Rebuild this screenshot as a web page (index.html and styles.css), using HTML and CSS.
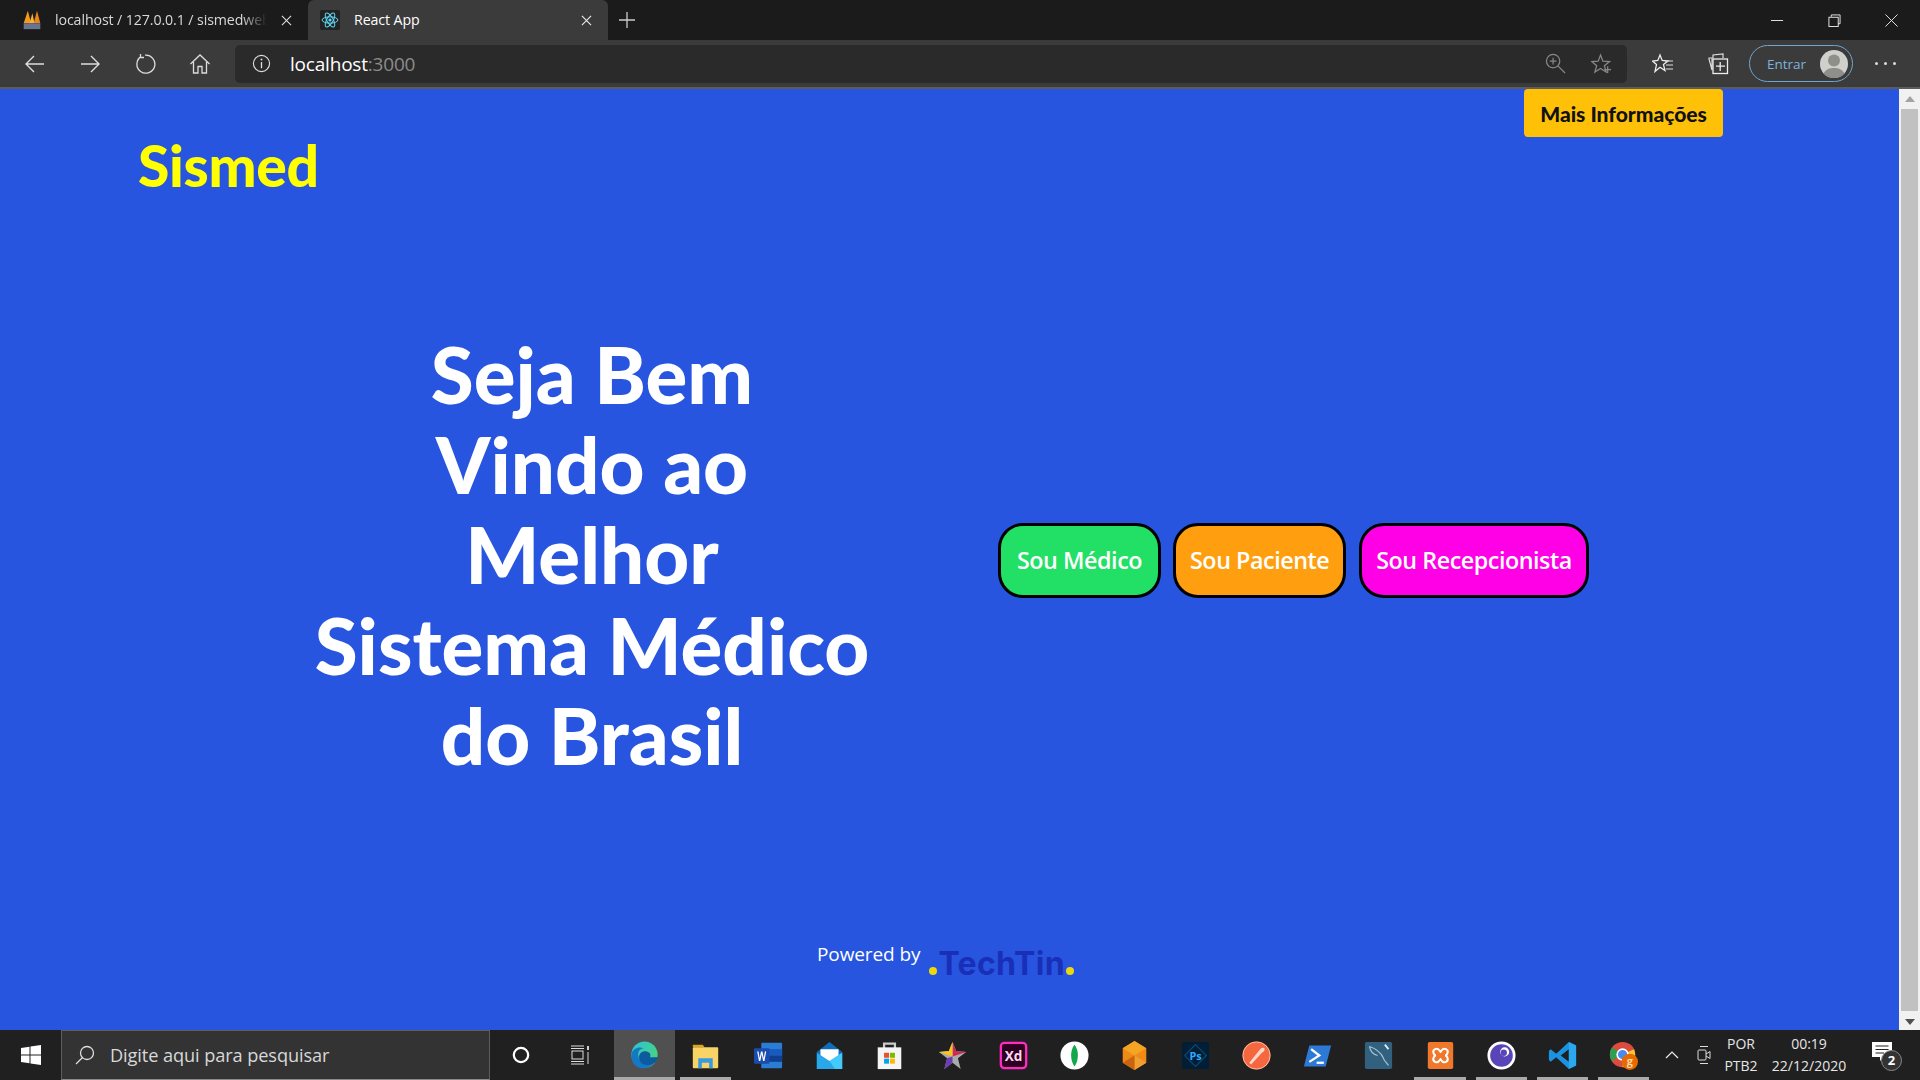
FILE: index.html
```html
<!DOCTYPE html>
<html lang="pt-BR">
<head>
<meta charset="utf-8">
<title>React App</title>
<link rel="stylesheet" href="styles.css">
</head>
<body>
<div class="window">
  <div class="tabbar">
    <div class="tab">
      <svg class="favicon" viewBox="0 0 24 24"><path d="M2 16 L7 1 L11 16Z" fill="#f39a1d"/><path d="M9 16 L12.500 4 L15 16Z" fill="#f6b23a"/><path d="M14 16 L18 1 L22 16Z" fill="#e9861a"/><rect x="2" y="16" width="20" height="7" fill="#6a7390"/></svg>
      <span class="tab-title fade">localhost / 127.0.0.1 / sismedweb</span>
      <svg class="tab-x" viewBox="0 0 12 12"><path d="M1 1L11 11M11 1L1 11" stroke="#ddd" stroke-width="1.2"/></svg>
    </div>
    <div class="tab active">
      <svg class="favicon" viewBox="0 0 24 24"><rect width="24" height="24" rx="2" fill="#222"/><g fill="none" stroke="#61dafb" stroke-width="1.2"><ellipse cx="12" cy="12" rx="9.5" ry="3.8"/><ellipse cx="12" cy="12" rx="9.5" ry="3.8" transform="rotate(60 12 12)"/><ellipse cx="12" cy="12" rx="9.5" ry="3.8" transform="rotate(120 12 12)"/></g><circle cx="12" cy="12" r="1.9" fill="#61dafb"/></svg>
      <span class="tab-title">React App</span>
      <svg class="tab-x" viewBox="0 0 12 12"><path d="M1 1L11 11M11 1L1 11" stroke="#eee" stroke-width="1.2"/></svg>
    </div>
    <svg class="newtab" viewBox="0 0 16 16"><path d="M8 0V16M0 8H16" stroke="#ccc" stroke-width="1.3"/></svg>
    <div class="winctrls">
      <svg class="winbtn" viewBox="0 0 14 14"><path d="M0 7H13" stroke="#eee" stroke-width="1"/></svg>
      <svg class="winbtn" viewBox="0 0 14 14"><path d="M3.5 3V1H13V10.5H11" fill="none" stroke="#eee"/><rect x="1" y="3.5" width="10" height="10" fill="none" stroke="#eee"/></svg>
      <svg class="winbtn" viewBox="0 0 14 14"><path d="M0.5 0.5L13.5 13.5M13.5 0.5L0.5 13.5" stroke="#eee" stroke-width="1"/></svg>
    </div>
  </div>

  <div class="toolbar">
    <div class="nav">
      <svg class="navicon" viewBox="0 0 22 22"><path d="M20 11H2M10 3L2 11L10 19" fill="none" stroke="#ddd" stroke-width="1.4"/></svg>
      <svg class="navicon" viewBox="0 0 22 22"><path d="M2 11H20M12 3L20 11L12 19" fill="none" stroke="#ddd" stroke-width="1.4"/></svg>
      <svg class="navicon" viewBox="0 0 22 22"><path d="M7 3.6A9 9 0 1 0 11 2.2M6.5 1V4.5H10" fill="none" stroke="#ddd" stroke-width="1.3"/></svg>
      <svg class="navicon" viewBox="0 0 22 22"><path d="M1.5 11L11 2L20.5 11M4.5 9V20H9V13.5H13V20H17.5V9" fill="none" stroke="#ddd" stroke-width="1.3"/></svg>
    </div>
    <div class="address">
      <svg class="info" viewBox="0 0 20 20"><circle cx="10" cy="10" r="8.5" fill="none" stroke="#ddd" stroke-width="1.2"/><path d="M10 8.5V15" stroke="#ddd" stroke-width="1.4"/><circle cx="10" cy="5.8" r="1" fill="#ddd"/></svg>
      <span class="url">localhost<span class="port">:3000</span></span>
      <svg class="addr-ic zoomic" viewBox="0 0 22 22"><circle cx="8.5" cy="8.5" r="7" fill="none" stroke="#888" stroke-width="1.3"/><path d="M13.5 13.5L21 21M5 8.5H12M8.5 5V12" stroke="#888" stroke-width="1.3"/></svg>
      <svg class="addr-ic" viewBox="0 0 22 22"><path d="M10 2L12.5 8.5L19.5 9L14 13.3L16 20L10 16.2L4 20L6 13.3L0.8 9L7.5 8.5Z" fill="none" stroke="#888" stroke-width="1.3"/><path d="M14 17.5H21M17.5 14V21" stroke="#888" stroke-width="1.3"/></svg>
    </div>
    <svg class="tool-ic fav" viewBox="0 0 22 22"><path d="M8 2L10.2 7.5L16 8L11.5 11.6L13 17.5L8 14.3L3 18.5L4.5 11.6L0.5 8L5.8 7.5Z" fill="none" stroke="#eee" stroke-width="1.3"/><path d="M13 8H21M14 12H21M14 16H21" stroke="#ddd" stroke-width="1.2"/></svg>
    <svg class="tool-ic coll" viewBox="0 0 22 22"><path d="M6 5V2L16 1V5M2 5H5V17L2 6Z" fill="none" stroke="#ddd" stroke-width="1.2"/><rect x="6" y="6" width="14.5" height="14.5" fill="none" stroke="#eee" stroke-width="1.3"/><path d="M13.2 9V18M9 13.2H18" stroke="#eee" stroke-width="1.3"/></svg>
    <div class="signin">
      <span>Entrar</span>
      <svg class="avatar" viewBox="0 0 28 28"><circle cx="14" cy="14" r="14" fill="#cfcfcb"/><circle cx="14" cy="10.5" r="6" fill="#8e8e8a"/><path d="M3.5 23.5C6 19 10 18 14 18S22 19 24.5 23.5A14 14 0 0 1 3.5 23.5Z" fill="#8e8e8a"/></svg>
    </div>
    <div class="more"><i></i><i></i><i></i></div>
  </div>

  <div class="viewport">
    <main class="page">
      <header class="page-head">
        <h2 class="brand">Sismed</h2>
        <button class="info-btn">Mais Informações</button>
      </header>
      <section class="hero">
        <h1 class="welcome">Seja Bem<br>Vindo ao<br>Melhor<br>Sistema Médico<br>do Brasil</h1>
        <div class="roles">
          <button class="role medico">Sou Médico</button>
          <button class="role paciente">Sou Paciente</button>
          <button class="role recep">Sou Recepcionista</button>
        </div>
      </section>
      <footer class="powered">
        <span>Powered by</span>
        <span class="logo"><i class="dot"></i>TechTin<i class="dot"></i></span>
      </footer>
    </main>
    <aside class="scrollbar">
      <svg class="arrow" viewBox="0 0 10 6"><path d="M5 0L10 6H0Z" fill="#a3a3a3"/></svg>
      <div class="thumb"></div>
      <svg class="arrow" viewBox="0 0 10 6"><path d="M5 6L0 0H10Z" fill="#505050"/></svg>
    </aside>
  </div>

  <div class="taskbar">
    <div class="start"><svg class="winlogo" viewBox="0 0 20 20"><path d="M0 3L8.5 1.7V9.5H0ZM9.5 1.5L20 0V9.5H9.5ZM0 10.5H8.5V18.3L0 17ZM9.5 10.5H20V20L9.5 18.5Z" fill="#fff"/></svg></div>
    <div class="search">
      <svg class="lens" viewBox="0 0 20 20"><circle cx="12" cy="8" r="6.5" fill="none" stroke="#ddd" stroke-width="1.3"/><path d="M7.5 12.5L1 19" stroke="#ddd" stroke-width="1.3"/></svg>
      <span>Digite aqui para pesquisar</span>
    </div>
    <div class="sys-btn"><svg class="cortana" viewBox="0 0 18 18"><circle cx="9" cy="9" r="7.2" fill="none" stroke="#fff" stroke-width="2.2"/></svg></div>
    <div class="sys-btn"><svg class="taskview" viewBox="0 0 20 20"><path d="M1 1H14M1 3.5H14M1 16.5H14M1 19H14" stroke="#ddd" stroke-width="1"/><rect x="2" y="6" width="11" height="8" fill="none" stroke="#ddd"/><path d="M18 1V5" stroke="#fff" stroke-width="1.6"/><path d="M18 7V19" stroke="#ddd" stroke-width="1"/></svg></div>

    <div class="apps">
      <div class="app current"><svg viewBox="0 0 32 32"><defs><linearGradient id="edge" x1="0" y1="0" x2="1" y2="1"><stop offset="0" stop-color="#2bc3d4"/><stop offset="1" stop-color="#52d76b"/></linearGradient></defs><circle cx="16" cy="15" r="14.5" fill="url(#edge)"/><path d="M1.5 16C2 8 10 6 15 8C9 9 8 14 10 19C12 25 20 27 26 25C21 31 12 31.500 7 28C3 25 1.500 21 1.500 16Z" fill="#1578c4"/><path d="M10 18C10 12 16 10 20 12C24 14 22 18 22 18H31C30 22 27 25 24 26C17 28 10 25 10 18Z" fill="#0d5aa0"/></svg></div>
      <div class="app open"><svg viewBox="0 0 32 32"><path d="M2 4H13L15 7H2Z" fill="#e0a21a"/><rect x="2" y="7" width="28" height="23" rx="1" fill="#f8d466"/><path d="M8 30V19H24V30H20V24H12V30Z" fill="#3a9adf"/></svg></div>
      <div class="app nudge"><svg viewBox="0 0 32 32"><rect x="8" y="2" width="23" height="28" rx="1" fill="#2b7cd3"/><rect x="8" y="9" width="23" height="7" fill="#185abd"/><rect x="8" y="16" width="23" height="7" fill="#103f91"/><rect x="0" y="8" width="17" height="17" rx="1" fill="#1a4cb0"/><path d="M3.500 11.500L5.500 22H7L8.500 14.500L10 22H11.500L13.500 11.500H12L10.800 19L9.300 11.500H7.700L6.200 19L5 11.500Z" fill="#fff"/></svg></div>
      <div class="app nudge"><svg viewBox="0 0 32 32"><path d="M2 12L16 1L30 12V31H2Z" fill="#0f6cbd"/><path d="M6 9H26V18L16 24L6 18Z" fill="#fff"/><path d="M2 13L16 22L30 13V31H2Z" fill="#28a8ea"/><path d="M16 22L30 13V31H22Z" fill="#50d9ff" opacity=".7"/></svg></div>
      <div class="app"><svg viewBox="0 0 32 32"><path d="M10 8V3H22V8" fill="none" stroke="#ccc" stroke-width="2.500"/><path d="M3 7H29V31H3Z" fill="#f5f5f5"/><rect x="10" y="13" width="5.500" height="5.500" fill="#e8502f"/><rect x="16.500" y="13" width="5.500" height="5.500" fill="#7db900"/><rect x="10" y="19.500" width="5.500" height="5.500" fill="#00a4ef"/><rect x="16.500" y="19.500" width="5.500" height="5.500" fill="#ffb900"/></svg></div>
      <div class="app nudge"><svg viewBox="0 0 32 32"><path d="M16 1L20 11L31 12L22 19L25 31L16 24L7 31L10 19L1 12L12 11Z" fill="#aaa"/><path d="M16 1L20 11L31 12L16 17Z" fill="#c92a56"/><path d="M16 1L16 17L1 12L12 11Z" fill="#f7c51e"/><path d="M16 17L10 19L7 31L16 24Z" fill="#6e3bb5"/></svg></div>
      <div class="app nudge"><svg viewBox="0 0 32 32"><rect x="2" y="2" width="28" height="28" rx="4" fill="#2e001f" stroke="#ff2bc2" stroke-width="2.500"/><text x="16" y="22" text-anchor="middle" class="xd">Xd</text></svg></div>
      <div class="app nudge"><svg viewBox="0 0 32 32"><circle cx="16" cy="16" r="15.500" fill="#fff"/><path d="M16 4C21 10 21 21 16 28C11 21 11 10 16 4Z" fill="#13a64b"/></svg></div>
      <div class="app"><svg viewBox="0 0 32 32"><path d="M16 0L29 8V24L16 32L3 24V8Z" fill="#ef8a17"/><path d="M16 0L29 8L16 16L3 8Z" fill="#f5a524"/><path d="M16 16L29 24L16 32Z" fill="#f0a030"/><path d="M3 24L16 16V32Z" fill="#c9640f"/></svg></div>
      <div class="app"><svg viewBox="0 0 32 32"><rect x="1" y="1" width="30" height="30" rx="3" fill="#001e36"/><path d="M16 4L28 16L16 28L4 16Z" fill="none" stroke="#0f4a75" stroke-width="1.200"/><text x="16" y="21" text-anchor="middle" class="ps">Ps</text></svg></div>
      <div class="app"><svg viewBox="0 0 32 32"><circle cx="16" cy="16" r="15.500" fill="#f4673f"/><path d="M8 24L20 9C22 7 25 7 25 9C25 11 23 12 22 13L10 26Z" fill="#ffd7c8"/><circle cx="16" cy="16" r="15" fill="none" stroke="#fff" stroke-opacity=".6" stroke-width="1"/></svg></div>
      <div class="app"><svg viewBox="0 0 32 32"><path d="M7 5H31L25 28H1Z" fill="#2d7ad6"/><path d="M9 9L18 16L7 23" fill="none" stroke="#fff" stroke-width="2.500"/><path d="M15 24H23" stroke="#fff" stroke-width="2.500"/></svg></div>
      <div class="app"><svg viewBox="0 0 32 32"><rect x="1" y="1" width="30" height="30" rx="2" fill="#31617f"/><path d="M6 6C12 8 18 12 21 18C22 22 25 24 27 27M6 6C7 12 11 15 15 16" fill="none" stroke="#a9c6d6" stroke-width="1.300"/><path d="M23 4L27 9" stroke="#e4eef3" stroke-width="2"/></svg></div>
      <div class="app open"><svg viewBox="0 0 32 32"><rect x="2" y="1" width="28" height="30" rx="2" fill="#f0782a"/><path d="M10 9C14 7 15 11 16 12C17 11 18 7 22 9C26 11 23 16 21 16C23 16 26 21 22 23C18 25 17 21 16 20C15 21 14 25 10 23C6 21 9 16 11 16C9 16 6 11 10 9Z" fill="none" stroke="#fff" stroke-width="2.200"/></svg></div>
      <div class="app open"><svg viewBox="0 0 32 32"><circle cx="16" cy="16" r="14" fill="#5a45b8" stroke="#fff" stroke-width="3"/><circle cx="19.500" cy="12" r="5" fill="#fff"/><circle cx="18.500" cy="13" r="3.500" fill="#5a45b8"/></svg></div>
      <div class="app open"><svg viewBox="0 0 32 32"><path d="M23 1L31 5V27L23 31L9 18L3 23L1 21V11L3 9L9 14ZM23 9L14 16L23 23Z" fill="#1c93e0"/><path d="M23 1L31 5V27L23 31Z" fill="#2aa8f0"/></svg></div>
      <div class="app open"><svg viewBox="0 0 32 32"><circle cx="15" cy="15" r="14" fill="#dd4b3e"/><path d="M15 15L3 22A14 14 0 0 1 3.500 7Z" fill="#2f9e4f"/><path d="M15 15L27.500 9A14 14 0 0 1 15 29Z" fill="#f6c82f"/><circle cx="15" cy="15" r="6" fill="#4a8af0" stroke="#fff" stroke-width="1.800"/><circle cx="23" cy="23" r="9" fill="#e66a00"/><text x="23" y="27" text-anchor="middle" class="badge-g">g</text></svg></div>
    </div>

    <div class="tray">
      <svg class="chev" viewBox="0 0 14 8"><path d="M1 7L7 1L13 7" fill="none" stroke="#eee" stroke-width="1.200"/></svg>
      <svg class="cam" viewBox="0 0 14 22"><path d="M3 2.500H11M3 19.500H11" stroke="#ddd"/><rect x="1" y="6" width="8" height="10" rx="1" fill="none" stroke="#ddd"/><path d="M9 10L13 7.500V14.500L9 12" fill="none" stroke="#ddd"/></svg>
      <div class="lang"><span>POR</span><span>PTB2</span></div>
      <div class="clock"><span>00:19</span><span>22/12/2020</span></div>
      <div class="notif">
        <svg class="bubble" viewBox="0 0 20 20"><path d="M0 0H20V15H12L8 19V15H0Z" fill="#fff"/><path d="M3.500 4H16.500M3.500 7.500H16.500M3.500 11H12" stroke="#222" stroke-width="1.200"/></svg>
        <span class="count">2</span>
      </div>
    </div>
  </div>
</div>
</body>
</html>
```
FILE: styles.css
```css
* { box-sizing: border-box; }
html, body { margin: 0; height: 100%; overflow: hidden; }
body { font-family: "Open Sans", "Noto Sans", sans-serif; background: #1c1c1c; }
.window { width: 1920px; height: 1080px; display: flex; flex-direction: column; }

/* tab strip */
.tabbar { height: 40px; background: #1b1b1b; display: flex; align-items: stretch; flex: none; }
.tab { width: 306px; display: flex; align-items: center; padding: 0 14px 0 22px; color: #d8d8d8; font-size: 14.2px; letter-spacing: -.1px; }
.tab.active { width: 300px; margin-left: 2px; background: #3b3b3b; border-radius: 6px 6px 0 0; color: #fff; padding: 0 16px 0 12px; }
.favicon { width: 20px; height: 20px; flex: none; }
.tab-title { flex: 1; margin: 0 0 2px 13px; white-space: nowrap; overflow: hidden; }
.tab.active .tab-title { margin-left: 14px; }
.fade { -webkit-mask-image: linear-gradient(90deg, #000 88%, transparent 100%); mask-image: linear-gradient(90deg, #000 88%, transparent 100%); margin-right: 14px; }
.tab-x { width: 11px; height: 11px; flex: none; }
.newtab { width: 16px; height: 16px; align-self: center; margin-left: 11px; }
.winctrls { margin-left: auto; display: flex; align-items: center; padding-right: 22px; gap: 44px; }
.winbtn { width: 13px; height: 13px; }

/* toolbar */
.toolbar { height: 49px; flex: none; background: #3b3b3b; border-bottom: 2px solid #5c5c5c; display: flex; align-items: center; }
.nav { width: 235px; display: flex; align-items: center; padding-left: 24px; gap: 33px; }
.navicon { width: 22px; height: 22px; }
.address { width: 1392px; height: 38px; background: #2a2a2a; border-radius: 5px; display: flex; align-items: center; padding-left: 17px; }
.info { width: 19px; height: 19px; }
.url { margin-left: 19px; font-size: 19px; color: #fff; letter-spacing: -.2px; flex: 1; }
.port { color: #8c8c8c; }
.addr-ic { width: 21px; height: 21px; margin-right: 25px; }
.addr-ic:last-of-type { margin-right: 15px; }
.tool-ic { width: 22px; height: 22px; flex: none; }
.fav { margin-left: 25px; }
.coll { margin-left: 33px; }
.signin { margin-left: 20px; width: 104px; height: 37px; border: 1.5px solid #6fa6cf; border-radius: 19px; display: flex; align-items: center; justify-content: space-between; padding: 0 4px 0 17px; font-size: 13.5px; color: #7cb4de; }
.avatar { width: 28px; height: 28px; }
.more { margin-left: 22px; display: flex; gap: 6px; }
.more i { width: 3px; height: 3px; border-radius: 50%; background: #ddd; }

/* page */
.viewport { flex: 1; display: flex; min-height: 0; }
.page { flex: 1; background: #2755df; display: flex; flex-direction: column; position: relative; }
.page-head { display: flex; justify-content: space-between; align-items: flex-start; padding: 0 176px 0 138px; }
.brand { margin: 43px 0 0; font-family: "Lato", sans-serif; font-size: 57px; line-height: 66px; font-weight: 900; color: #ffff00; letter-spacing: -.3px; }
.info-btn { width: 199px; height: 48px; border: 0; border-radius: 4px; background: #ffc107; color: #111; font-family: "Lato", sans-serif; font-size: 21px; font-weight: 900; padding: 0; }
.hero { display: flex; align-items: center; margin-top: 131px; }
.welcome { margin: 0 0 0 240px; width: 704px; text-align: center; font-family: "Lato", sans-serif; font-size: 78px; line-height: 90.2px; font-weight: 900; color: #fff; }
.roles { display: flex; gap: 12px; margin: 11px 0 0 54px; }
.role { height: 75px; border: 3px solid #000; border-radius: 25px; padding: 0 14px; color: #fff; font-family: "Open Sans", sans-serif; font-size: 23.3px; font-weight: 600; letter-spacing: -.45px; white-space: nowrap; }
.medico { width: 163px; background: #22e066; }
.paciente { width: 173px; background: #ff9f10; }
.recep { background: #ff00e6; margin-left: 1px; width: 230px; }
.powered { margin-top: auto; height: 89px; display: flex; align-items: flex-start; padding-left: 817px; color: #fff; font-size: 19px; letter-spacing: -.1px; }
.logo { margin: 3px 0 0 9px; display: flex; align-items: baseline; font-family: "Inter", sans-serif; font-weight: 700; font-size: 32px; line-height: 40px; color: #1a2fb8; letter-spacing: .3px; gap: 1px; }
.dot { width: 8px; height: 8px; border-radius: 50%; background: #ecd90a; }

/* scrollbar */
.scrollbar { width: 21px; flex: none; background: #f1f1f1; display: flex; flex-direction: column; align-items: center; padding: 7px 0 5px; }
.arrow { width: 10px; height: 6px; flex: none; }
.thumb { flex: 1; width: 17px; background: #c1c1c1; margin: 7px 0 8px; }

/* taskbar */
.taskbar { height: 50px; flex: none; background: #202020; display: flex; align-items: center; }
.start { width: 61px; display: flex; justify-content: center; }
.winlogo { width: 20px; height: 20px; }
.search { width: 429px; height: 50px; background: #333; border: 1px solid #5d5d5d; border-bottom-color: #8a8a8a; display: flex; align-items: center; padding-left: 13px; color: #d8d8d8; font-size: 18.2px; letter-spacing: -.1px; }
.lens { width: 20px; height: 20px; margin-right: 15px; }
.sys-btn { width: 61px; display: flex; justify-content: center; }
.sys-btn + .sys-btn svg { margin-right: 3px; }
.cortana { width: 18px; height: 18px; }
.taskview { width: 20px; height: 20px; }
.apps { display: flex; margin-left: 2px; }
.app { width: 61.2px; height: 50px; display: flex; align-items: center; justify-content: center; position: relative; }
.app svg { width: 29px; height: 29px; }
.app.nudge svg { margin-left: 3px; }
.app.current { background: #505050; box-shadow: inset 0 -3px 0 #aaa; }
.app.open::after { content: ""; position: absolute; left: 5px; right: 5px; bottom: 0; height: 3px; background: #aaa; }
.xd { font: 700 15px "Open Sans", sans-serif; fill: #ffd7f2; }
.ps { font: 700 12px "Open Sans", sans-serif; fill: #31a8ff; }
.badge-g { font: 700 12px "Open Sans", sans-serif; fill: #ffd9a8; }
.tray { display: flex; align-items: center; margin-left: auto; height: 50px; color: #e6e6e6; font-size: 14px; }
.chev { width: 14px; height: 8px; margin-right: 18px; }
.cam { width: 14px; height: 22px; margin-right: 11px; }
.lang, .clock { display: flex; flex-direction: column; align-items: center; line-height: 22px; }
.lang { width: 38px; margin-right: 10px; }
.clock { width: 78px; margin-right: 24px; }
.notif { position: relative; width: 30px; height: 30px; margin-right: 18px; }
.bubble { width: 20px; height: 20px; position: absolute; left: 0; top: 2px; }
.count { position: absolute; left: 9px; top: 10px; width: 21px; height: 21px; border-radius: 50%; background: #333; border: 1px solid #888; color: #fff; font-size: 13px; font-weight: 700; line-height: 19px; text-align: center; }
```
